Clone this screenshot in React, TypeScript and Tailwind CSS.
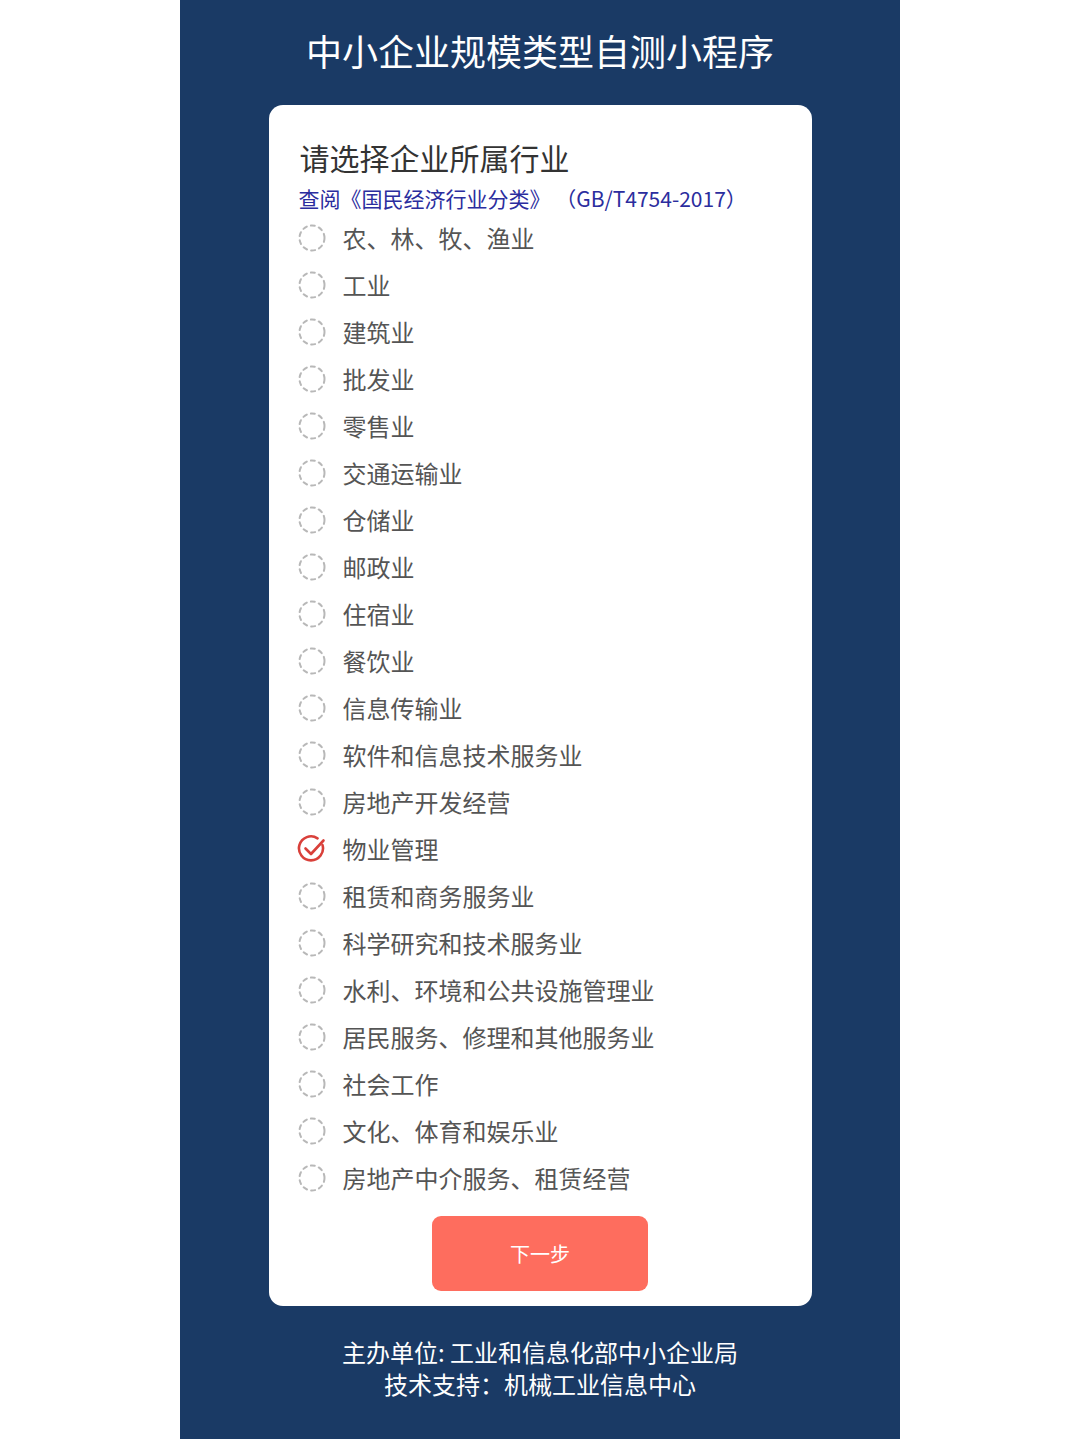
import React, { useState } from 'react';

const industries = [
  '农、林、牧、渔业',
  '工业',
  '建筑业',
  '批发业',
  '零售业',
  '交通运输业',
  '仓储业',
  '邮政业',
  '住宿业',
  '餐饮业',
  '信息传输业',
  '软件和信息技术服务业',
  '房地产开发经营',
  '物业管理',
  '租赁和商务服务业',
  '科学研究和技术服务业',
  '水利、环境和公共设施管理业',
  '居民服务、修理和其他服务业',
  '社会工作',
  '文化、体育和娱乐业',
  '房地产中介服务、租赁经营',
];

const EmptyRadio = () => (
  <svg width="30" height="30" viewBox="0 0 30 30">
    <circle
      cx="15"
      cy="15"
      r="12.5"
      fill="none"
      stroke="#b8b8b8"
      strokeWidth="2"
      strokeDasharray="4 4.2"
      strokeLinecap="round"
    />
  </svg>
);

const CheckedRadio = () => (
  <svg width="30" height="30" viewBox="0 0 30 30">
    <path
      d="M25.5 11 A12 12 0 1 1 20.5 4.3"
      fill="none"
      stroke="#d9403a"
      strokeWidth="2.6"
      strokeLinecap="round"
    />
    <path
      d="M8.5 14.5 L14 20 L26.5 6.5"
      fill="none"
      stroke="#d9403a"
      strokeWidth="2.6"
      strokeLinecap="round"
      strokeLinejoin="round"
    />
  </svg>
);

const App: React.FC = () => {
  const [selected, setSelected] = useState(13);

  return (
    <div
      className="min-h-screen bg-white flex justify-center [text-spacing-trim:space-all]"
      style={{ fontFamily: '"Noto Sans CJK SC", "Noto Sans", sans-serif' }}
    >
      <div className="w-[720px] min-h-[1439px] bg-[#1a3a65] flex flex-col items-center">
        {/* 标题 */}
        <div className="h-[105px] flex items-center justify-center text-white text-[36px] pb-[5px]">
          中小企业规模类型自测小程序
        </div>

        {/* 卡片 */}
        <div className="w-[543px] bg-white rounded-[14px] pt-[32px] pb-[15px] px-[30px]">
          <div className="text-[30px] leading-[40px] text-[#333] pl-[1px]">请选择企业所属行业</div>
          <div className="text-[21px] leading-[30px] text-[#2b2d9e] mt-[6px]">
            查阅《国民经济行业分类》 （GB/T4754-2017）
          </div>

          <div className="flex flex-col mt-[1px]">
            {industries.map((name, i) => (
              <div
                key={name}
                className="h-[47px] flex items-center cursor-pointer"
                onClick={() => setSelected(i)}
              >
                <div className="w-[30px] h-[30px] flex items-center justify-center -ml-[2px]">
                  {selected === i ? <CheckedRadio /> : <EmptyRadio />}
                </div>
                <div className="ml-[16px] text-[24px] text-[#555]">{name}</div>
              </div>
            ))}
          </div>

          <div className="flex justify-center mt-[15px]">
            <button className="w-[216px] h-[75px] rounded-[9px] bg-[#fe6d5e] text-white text-[20px]">
              下一步
            </button>
          </div>
        </div>

        {/* 底部 */}
        <div className="mt-[30px] text-white text-[24px] leading-[32px] text-center">
          <div>主办单位: 工业和信息化部中小企业局</div>
          <div>技术支持：机械工业信息中心</div>
        </div>
      </div>
    </div>
  );
};

export default App;
